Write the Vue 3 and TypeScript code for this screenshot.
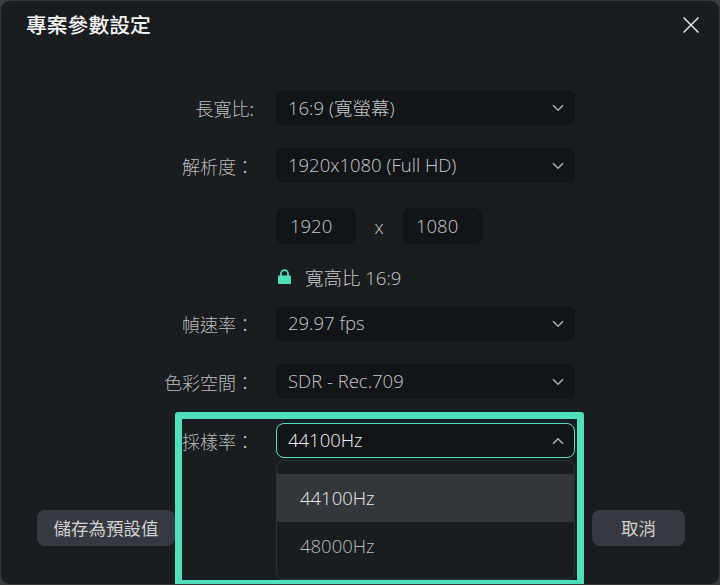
<script setup lang="ts">
interface Row {
  label: string
  value: string
}
const topRows: Row[] = [
  { label: '長寬比:', value: '16:9 (寬螢幕)' },
  { label: '解析度：', value: '1920x1080 (Full HD)' },
]
const midRows: Row[] = [
  { label: '幀速率：', value: '29.97 fps' },
  { label: '色彩空間：', value: 'SDR - Rec.709' },
]
const options = ['44100Hz', '48000Hz']
</script>

<template>
  <div class="dialog">
    <header class="head">
      <h1 class="title">專案參數設定</h1>
      <svg class="close" width="16" height="16" viewBox="0 0 16 16" aria-label="關閉">
        <path d="M0.5 0.5 L15.5 15.5 M15.5 0.5 L0.5 15.5" stroke="#e4e5e6" stroke-width="1.5" fill="none" />
      </svg>
    </header>

    <div class="form">
      <div v-for="r in topRows" :key="r.label" class="row">
        <span class="label">{{ r.label }}</span>
        <div class="select">
          <span class="val">{{ r.value }}</span>
          <svg class="chev" width="12" height="8" viewBox="0 0 12 8"><path d="M1 1.2 L6 6.2 L11 1.2" /></svg>
        </div>
      </div>

      <div class="row size">
        <span class="label"></span>
        <div class="num"><span class="val">1920</span></div>
        <span class="times">x</span>
        <div class="num"><span class="val">1080</span></div>
      </div>

      <div class="row lock">
        <span class="label"></span>
        <svg width="13" height="16" viewBox="0 0 13 16" class="lock-icon">
          <path d="M3 7 V4.6 a3.5 3.5 0 0 1 7 0 V7" fill="none" stroke="#4fe0bb" stroke-width="1.8" />
          <rect x="0" y="6.5" width="13" height="8.5" rx="1" fill="#4fe0bb" />
        </svg>
        <span class="val">寬高比 16:9</span>
      </div>

      <div v-for="r in midRows" :key="r.label" class="row mid">
        <span class="label">{{ r.label }}</span>
        <div class="select">
          <span class="val">{{ r.value }}</span>
          <svg class="chev" width="12" height="8" viewBox="0 0 12 8"><path d="M1 1.2 L6 6.2 L11 1.2" /></svg>
        </div>
      </div>

      <div class="row rate">
        <span class="label">採樣率：</span>
        <div class="select open">
          <span class="val">44100Hz</span>
          <svg class="chev" width="12" height="8" viewBox="0 0 12 8"><path d="M1 6.8 L6 1.8 L11 6.8" /></svg>
          <ul class="menu">
            <li v-for="(o, i) in options" :key="o" class="opt" :class="{ active: i === 0 }">
              <span class="val">{{ o }}</span>
            </li>
          </ul>
        </div>
      </div>
    </div>

    <footer class="foot">
      <button class="btn save">儲存為預設值</button>
      <button class="btn cancel">取消</button>
    </footer>

    <div class="highlight"></div>
  </div>
</template>

<style>
html, body { margin: 0; background: #3a3e43; }
</style>

<style scoped>
.dialog {
  position: relative;
  box-sizing: border-box;
  width: 720px;
  height: 585px;
  overflow: hidden;
  background: #1a1d20;
  border: 1px solid #33373c;
  border-radius: 10px;
  font-family: "Open Sans", "Noto Sans CJK TC", sans-serif;
  color: #c6c8ca;
  font-size: 18.5px;
  font-weight: 300;
}
.val { padding-bottom: 2px; }
.head {
  height: 49px;
  display: flex;
  align-items: center;
  justify-content: space-between;
  padding: 0 20px 0 25px;
}
.title {
  margin: 0 0 4px;
  font-size: 20.8px;
  font-weight: 500;
  color: #f4f5f5;
  font-family: "Noto Sans CJK TC", sans-serif;
  line-height: 44px;
}
.close { margin-top: -1px; }
.form {
  display: flex;
  flex-direction: column;
  padding-top: 40px;
}
.row {
  display: flex;
  align-items: center;
  height: 35px;
  margin-bottom: 23px;
}
.label {
  width: 253px;
  flex: none;
  text-align: right;
  font-family: "Noto Sans CJK TC", sans-serif;
  font-size: 18px;
  font-weight: 300;
  color: #b9bcbf;
}
.row .label { margin-right: 22px; }
.select {
  position: relative;
  box-sizing: border-box;
  width: 299px;
  height: 35px;
  padding: 0 12px;
  display: flex;
  align-items: center;
  justify-content: space-between;
  background: #121518;
  border-radius: 8px;
}
.chev { fill: none; stroke: #a9abad; stroke-width: 1.6; }
.select .chev { margin-right: -1px; }
.size { height: 36px; margin-top: 2px; margin-bottom: 18px; }
.num {
  box-sizing: border-box;
  width: 80px;
  height: 36px;
  padding-left: 14px;
  display: flex;
  align-items: center;
  background: #121518;
  border-radius: 8px;
}
.times { width: 46px; text-align: center; }
.lock { height: 32px; margin-bottom: 12px; }
.lock-icon { margin: -3px 14px 0 2px; }
.mid { margin-bottom: 23px; }
.rate { margin-bottom: 0; margin-top: 1px; }
.open {
  border: 1px solid #4fe0bb;
  color: #f2f3f3;
  padding: 0 11px;
}
.menu {
  position: absolute;
  box-sizing: border-box;
  left: -1px;
  top: 36px;
  width: 299px;
  height: 120px;
  margin: 0;
  padding: 13px 0 0;
  list-style: none;
  background: #1a1d20;
  border: 1px solid #2e3237;
  border-radius: 8px;
}
.opt {
  height: 48px;
  padding-left: 23px;
  display: flex;
  align-items: center;
  color: #b9bcbf;
}
.opt.active { background: #33373b; color: #eceded; }
.foot {
  display: flex;
  justify-content: space-between;
  padding: 52px 34px 0 36px;
}
.btn {
  height: 36px;
  border: none;
  border-radius: 8px;
  background: #363a40;
  color: #cfd0d2;
  font-family: "Noto Sans CJK TC", sans-serif;
  font-size: 17.5px;
  font-weight: 400;
  padding: 0 0 2px;
}
.save { width: 138px; }
.cancel { width: 93px; }
.highlight {
  position: absolute;
  box-sizing: border-box;
  left: 174px;
  top: 411px;
  width: 409px;
  height: 175px;
  border: 7px solid #4fe0bb;
  border-radius: 3px;
  pointer-events: none;
}
</style>
